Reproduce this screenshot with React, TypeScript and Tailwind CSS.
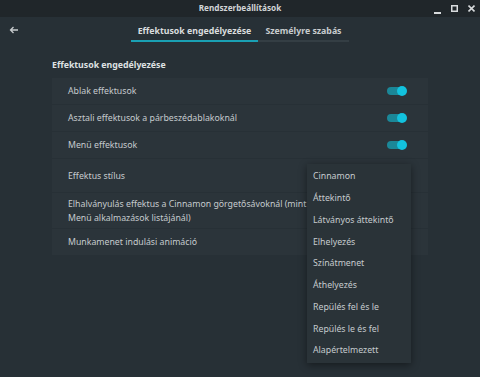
import React from "react";

const Toggle = () => (
  <div className="relative w-[20px] h-[10px] mr-[21px]">
    <div className="absolute left-0 top-[1px] w-[16px] h-[8px] rounded-full bg-[#1b8798]" />
    <div className="absolute right-0 top-0 w-[10px] h-[10px] rounded-full bg-[#12c2de]" />
  </div>
);

const Row = ({ h, children, toggle }: { h: string; children: React.ReactNode; toggle?: boolean }) => (
  <div className={`flex items-center justify-between bg-[#2b343a] pl-[16px] ${h}`}>
    <div className="text-[8.75px] leading-[14px] text-[#c6cbce] whitespace-nowrap">{children}</div>
    {toggle && <Toggle />}
  </div>
);

const items = [
  "Cinnamon",
  "Áttekintő",
  "Látványos áttekintő",
  "Elhelyezés",
  "Színátmenet",
  "Áthelyezés",
  "Repülés fel és le",
  "Repülés le és fel",
  "Alapértelmezett",
];

export default function App() {
  return (
    <div className="relative w-[480px] h-[377px] overflow-hidden bg-[#273036] font-['Noto_Sans','Open_Sans',sans-serif]">
      <div className="relative h-[17px] bg-[#20262a] flex items-center justify-center">
        <span className="text-[8.2px] font-bold text-[#d2d5d7] leading-none whitespace-nowrap">Rendszerbeállítások</span>
        <div className="absolute right-[5px] top-0 h-[17px] flex items-center gap-[10px] text-[#d8dbdd]">
          <svg width="7" height="12" viewBox="0 0 7 12"><rect x="0" y="9" width="7" height="2" fill="currentColor" /></svg>
          <svg width="7" height="12" viewBox="0 0 7 12"><rect x="0.75" y="2.75" width="5.5" height="5.5" fill="none" stroke="currentColor" strokeWidth="1.5" /></svg>
          <svg width="7" height="12" viewBox="0 0 7 12"><path d="M0.5 2.5 L6.5 8.5 M6.5 2.5 L0.5 8.5" stroke="currentColor" strokeWidth="1.6" /></svg>
        </div>
      </div>

      <div className="relative h-[30px] flex justify-center">
        <div className="absolute left-[9px] top-[8px] text-[#c8ccce]">
          <svg width="10" height="10" viewBox="0 0 10 10" fill="none" stroke="currentColor" strokeWidth="1.3">
            <path d="M9 5 H1.5 M4.5 2 L1.5 5 L4.5 8" />
          </svg>
        </div>
        <div className="flex pt-[7px]">
          <div className="w-[127px] flex flex-col items-center">
            <span className="text-[8.75px] font-bold text-[#dadddf] leading-[14px] whitespace-nowrap">Effektusok engedélyezése</span>
            <div className="mt-[2px] w-full h-[2px] bg-[#1aa0b4]" />
          </div>
          <div className="w-[91px] flex flex-col items-center">
            <span className="text-[8.75px] font-bold text-[#c8ccce] leading-[14px] whitespace-nowrap">Személyre szabás</span>
            <div className="mt-[2px] w-full h-[2px] bg-[#343e44]" />
          </div>
        </div>
      </div>

      <div className="pl-[52px] w-[428px] pt-[11px]">
        <div className="text-[8.75px] font-bold text-[#dfe2e3] leading-[15px] whitespace-nowrap">Effektusok engedélyezése</div>
        <div className="mt-[5px] flex flex-col gap-px">
          <Row h="h-[26px]" toggle>Ablak effektusok</Row>
          <Row h="h-[26px]" toggle>Asztali effektusok a párbeszédablakoknál</Row>
          <Row h="h-[26px]" toggle>Menü effektusok</Row>
          <Row h="h-[33px]">Effektus stílus</Row>
          <Row h="h-[35px]">
            Elhalványulás effektus a Cinnamon görgetősávoknál (mint a
            <br />
            Menü alkalmazások listájánál)
          </Row>
          <Row h="h-[26px]">Munkamenet indulási animáció</Row>
        </div>
      </div>

      <div className="absolute left-[307px] top-[164px] w-[104px] h-[199px] bg-[#2a3338] shadow-[0_2px_8px_rgba(0,0,0,0.45)] pt-[2px]">
        {items.map((t) => (
          <div key={t} className="h-[21.75px] flex items-center pl-[6px] text-[8.75px] text-[#c6cbce] whitespace-nowrap">
            {t}
          </div>
        ))}
      </div>
    </div>
  );
}
